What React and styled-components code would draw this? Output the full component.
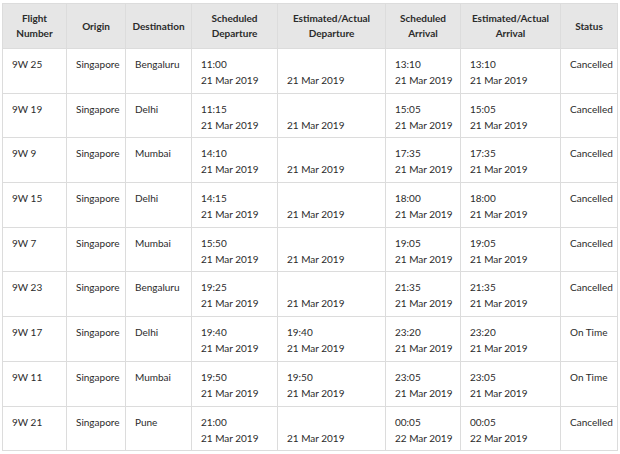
import React from "react";
import styled, { createGlobalStyle } from "styled-components";

const flights = [
  ["9W 25", "Bengaluru", "11:00", "21 Mar 2019", "", "21 Mar 2019", "13:10", "21 Mar 2019", "13:10", "21 Mar 2019", "Cancelled"],
  ["9W 19", "Delhi", "11:15", "21 Mar 2019", "", "21 Mar 2019", "15:05", "21 Mar 2019", "15:05", "21 Mar 2019", "Cancelled"],
  ["9W 9", "Mumbai", "14:10", "21 Mar 2019", "", "21 Mar 2019", "17:35", "21 Mar 2019", "17:35", "21 Mar 2019", "Cancelled"],
  ["9W 15", "Delhi", "14:15", "21 Mar 2019", "", "21 Mar 2019", "18:00", "21 Mar 2019", "18:00", "21 Mar 2019", "Cancelled"],
  ["9W 7", "Mumbai", "15:50", "21 Mar 2019", "", "21 Mar 2019", "19:05", "21 Mar 2019", "19:05", "21 Mar 2019", "Cancelled"],
  ["9W 23", "Bengaluru", "19:25", "21 Mar 2019", "", "21 Mar 2019", "21:35", "21 Mar 2019", "21:35", "21 Mar 2019", "Cancelled"],
  ["9W 17", "Delhi", "19:40", "21 Mar 2019", "19:40", "21 Mar 2019", "23:20", "21 Mar 2019", "23:20", "21 Mar 2019", "On Time"],
  ["9W 11", "Mumbai", "19:50", "21 Mar 2019", "19:50", "21 Mar 2019", "23:05", "21 Mar 2019", "23:05", "21 Mar 2019", "On Time"],
  ["9W 21", "Pune", "21:00", "21 Mar 2019", "", "21 Mar 2019", "00:05", "22 Mar 2019", "00:05", "22 Mar 2019", "Cancelled"],
];

const columns = [
  { label: ["Flight", "Number"], w: 64 },
  { label: ["Origin"], w: 59 },
  { label: ["Destination"], w: 66 },
  { label: ["Scheduled", "Departure"], w: 86 },
  { label: ["Estimated/Actual", "Departure"], w: 108 },
  { label: ["Scheduled", "Arrival"], w: 75 },
  { label: ["Estimated/Actual", "Arrival"], w: 100 },
  { label: ["Status"], w: 57 },
];

const GlobalStyle = createGlobalStyle`
  body {
    margin: 0;
    background: #fff;
    font-family: Lato, "Open Sans", sans-serif;
  }
`;

const Table = styled.table`
  margin: 3px 0 0 2px;
  width: 615px;
  border-collapse: collapse;
  table-layout: fixed;
  font-size: 10px;
  color: #2b2b2b;
`;

const Col = styled.col`
  width: ${({ $w }) => $w}px;
`;

const HeadRow = styled.tr`
  height: 45px;
  background: #e6e6e6;
`;

const Th = styled.th`
  border: 1px solid #dcdcdc;
  padding: 0 4px;
  font-weight: 700;
  line-height: 15px;
  text-align: center;
  vertical-align: middle;
  color: #2b2b2b;
`;

const Row = styled.tr`
  height: 44.7px;
`;

const Td = styled.td`
  border: 1px solid #dcdcdc;
  padding: 7px 9px 0;
  line-height: 16px;
  text-align: left;
  vertical-align: top;
  white-space: nowrap;
`;

const Line = styled.div`
  height: 16px;
`;

const TimeCell = ({ time, date }) => (
  <Td>
    <Line>{time}</Line>
    <Line>{date}</Line>
  </Td>
);

export default function App() {
  return (
    <>
      <GlobalStyle />
      <Table>
        <colgroup>
          {columns.map((c) => (
            <Col key={c.label.join(" ")} $w={c.w} />
          ))}
        </colgroup>
        <thead>
          <HeadRow>
            {columns.map((c) => (
              <Th key={c.label.join(" ")}>
                {c.label.map((l) => (
                  <div key={l}>{l}</div>
                ))}
              </Th>
            ))}
          </HeadRow>
        </thead>
        <tbody>
          {flights.map((f) => (
            <Row key={f[0]}>
              <Td>{f[0]}</Td>
              <Td>Singapore</Td>
              <Td>{f[1]}</Td>
              <TimeCell time={f[2]} date={f[3]} />
              <TimeCell time={f[4]} date={f[5]} />
              <TimeCell time={f[6]} date={f[7]} />
              <TimeCell time={f[8]} date={f[9]} />
              <Td>{f[10]}</Td>
            </Row>
          ))}
        </tbody>
      </Table>
    </>
  );
}
